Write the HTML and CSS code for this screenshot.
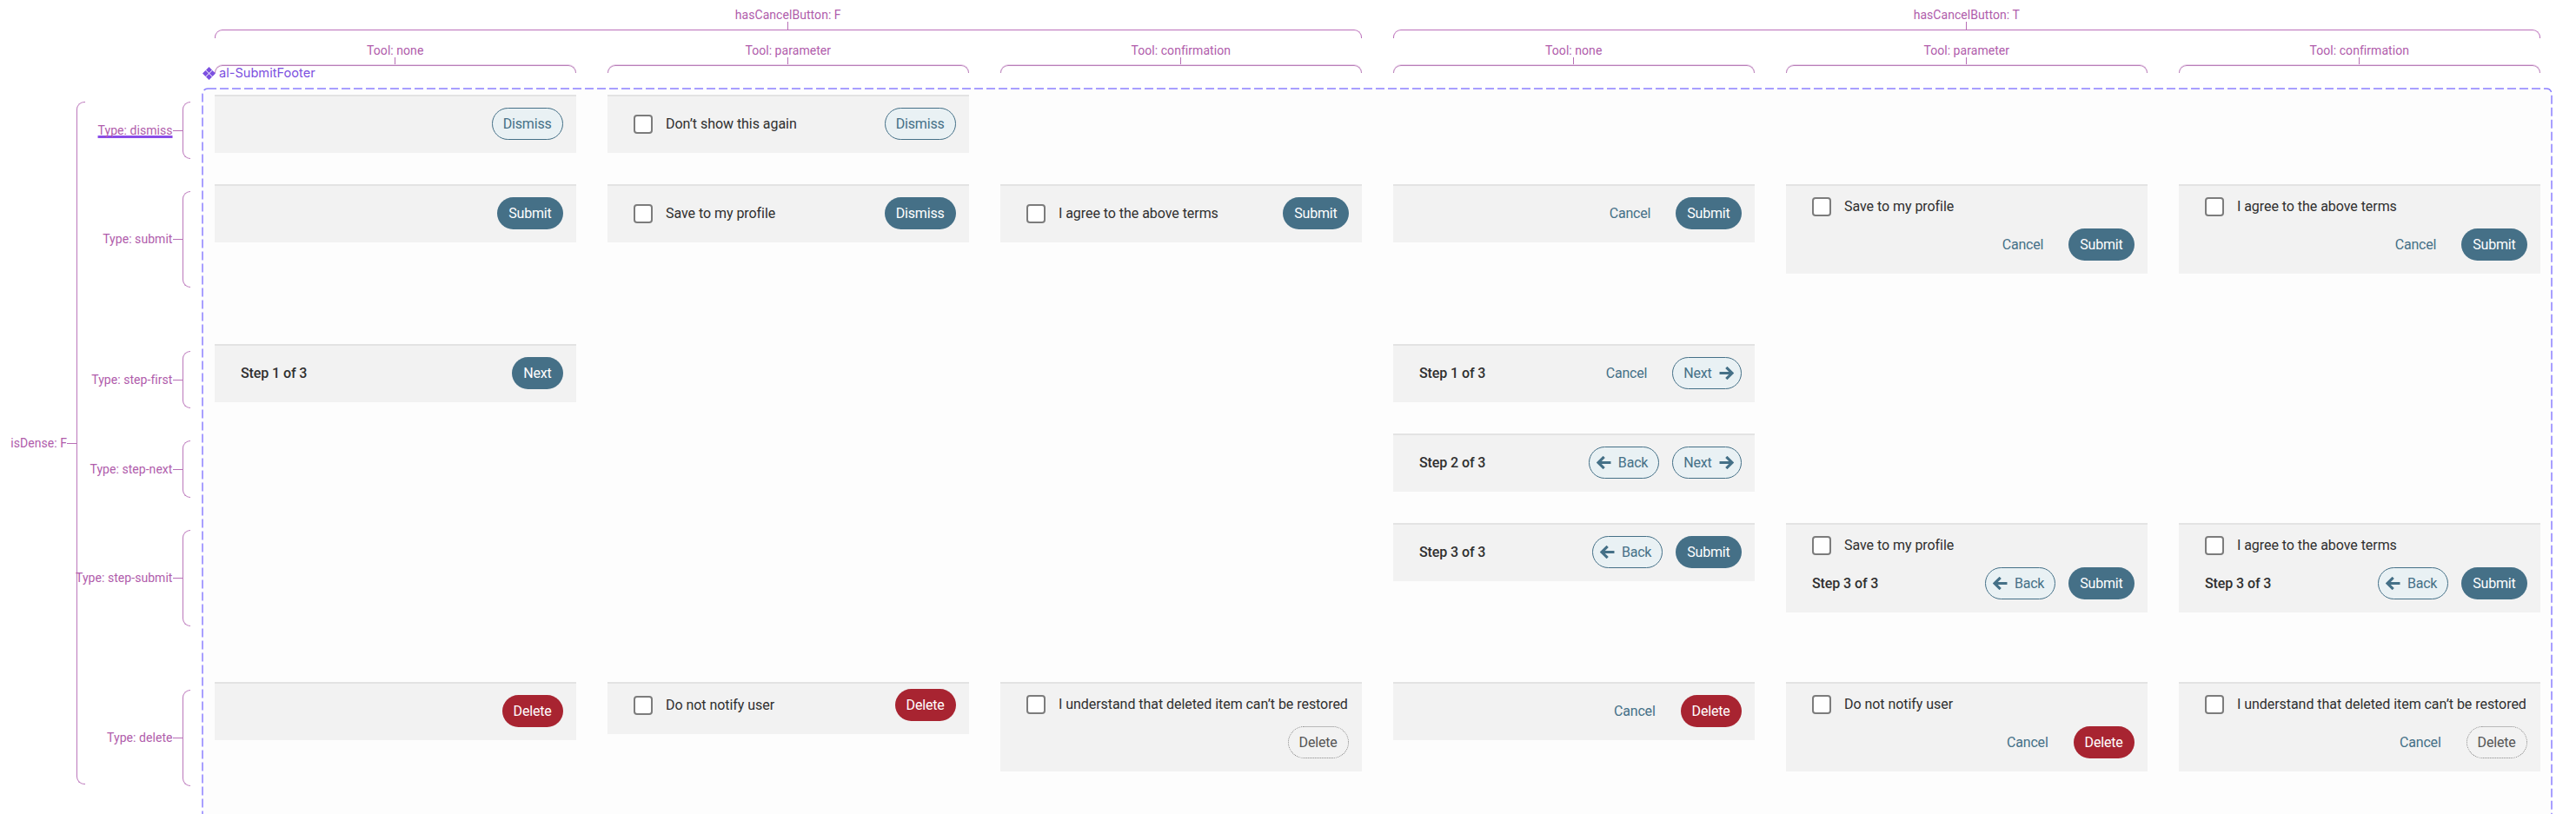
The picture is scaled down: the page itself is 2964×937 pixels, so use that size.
FILE: index.html
```html
<!DOCTYPE html>
<html lang="en">
<head>
<meta charset="utf-8">
<title>al-SubmitFooter</title>
<link rel="stylesheet" href="styles.css">
</head>
<body>
<svg width="0" height="0" class="defs" aria-hidden="true">
  <symbol id="arrow-right" viewBox="0 0 18 16"><path d="M0.500 8H15.500M8.800 1 16 8l-7.200 7" fill="none" stroke="currentColor" stroke-width="3.400"/></symbol>
  <symbol id="arrow-left" viewBox="0 0 18 16"><path d="M17.500 8H2.500M9.200 1 2 8l7.200 7" fill="none" stroke="currentColor" stroke-width="3.400"/></symbol>
</svg>
<main class="board">
  <svg class="frame" viewBox="0 0 2706 900" width="2706" height="900" aria-hidden="true"><rect x="1" y="1" width="2703" height="896" rx="6"/></svg>
  <div class="frame-title">
    <svg width="15" height="15" viewBox="0 0 15 15" aria-hidden="true"><path d="M7.5 0 11 3.5 7.5 7 4 3.5ZM3.500 4 7 7.500 3.500 11 0 7.500ZM11.500 4 15 7.500 11.500 11 8 7.500ZM7.500 8 11 11.500 7.500 15 4 11.500Z"/></svg>
    <span>al-SubmitFooter</span>
  </div>

  <aside class="side">
    <div class="dense">
      <span class="note">isDense: F</span><i class="tick-h"></i><i class="brace brace-dense"></i>
    </div>
    <div class="types">
      <div class="type sm after-sm"><span class="note selected">Type: dismiss</span><i class="tick-h"></i><i class="brace"></i></div>
      <div class="type lg after-lg"><span class="note">Type: submit</span><i class="tick-h"></i><i class="brace"></i></div>
      <div class="type sm after-sm"><span class="note">Type: step-first</span><i class="tick-h"></i><i class="brace"></i></div>
      <div class="type sm after-sm"><span class="note">Type: step-next</span><i class="tick-h"></i><i class="brace"></i></div>
      <div class="type lg after-lg"><span class="note">Type: step-submit</span><i class="tick-h"></i><i class="brace"></i></div>
      <div class="type lg"><span class="note">Type: delete</span><i class="tick-h"></i><i class="brace"></i></div>
    </div>
  </aside>

  <div class="matrix">
    <div class="heads">
      <div class="head group"><span class="note">hasCancelButton: F</span><i class="tick-v"></i><i class="arch"></i></div>
      <div class="head group"><span class="note">hasCancelButton: T</span><i class="tick-v"></i><i class="arch"></i></div>
      <div class="head tool"><span class="note">Tool: none</span><i class="tick-v"></i><i class="arch"></i></div>
      <div class="head tool"><span class="note">Tool: parameter</span><i class="tick-v"></i><i class="arch"></i></div>
      <div class="head tool"><span class="note">Tool: confirmation</span><i class="tick-v"></i><i class="arch"></i></div>
      <div class="head tool"><span class="note">Tool: none</span><i class="tick-v"></i><i class="arch"></i></div>
      <div class="head tool"><span class="note">Tool: parameter</span><i class="tick-v"></i><i class="arch"></i></div>
      <div class="head tool"><span class="note">Tool: confirmation</span><i class="tick-v"></i><i class="arch"></i></div>
    </div>

    <div class="cells">
      <!-- dismiss -->
      <div class="footer r1 c1"><div class="line"><div class="actions"><button class="btn outline">Dismiss</button></div></div></div>
      <div class="footer r1 c2"><div class="line"><label class="check"><i class="box"></i>Don’t show this again</label><div class="actions"><button class="btn outline">Dismiss</button></div></div></div>

      <!-- submit -->
      <div class="footer r2 c1"><div class="line"><div class="actions"><button class="btn primary">Submit</button></div></div></div>
      <div class="footer r2 c2"><div class="line"><label class="check"><i class="box"></i>Save to my profile</label><div class="actions"><button class="btn primary">Dismiss</button></div></div></div>
      <div class="footer r2 c3"><div class="line"><label class="check"><i class="box"></i>I agree to the above terms</label><div class="actions"><button class="btn primary">Submit</button></div></div></div>
      <div class="footer r2 c4"><div class="line"><div class="actions"><button class="btn ghost">Cancel</button><button class="btn primary">Submit</button></div></div></div>
      <div class="footer tall r2 c5"><label class="check"><i class="box"></i>Save to my profile</label><div class="line"><div class="actions"><button class="btn ghost">Cancel</button><button class="btn primary">Submit</button></div></div></div>
      <div class="footer tall r2 c6"><label class="check"><i class="box"></i>I agree to the above terms</label><div class="line"><div class="actions"><button class="btn ghost">Cancel</button><button class="btn primary">Submit</button></div></div></div>

      <!-- step-first -->
      <div class="footer r3 c1"><div class="line"><span class="step">Step 1 of 3</span><div class="actions"><button class="btn primary">Next</button></div></div></div>
      <div class="footer r3 c4"><div class="line"><span class="step">Step 1 of 3</span><div class="actions"><button class="btn ghost">Cancel</button><button class="btn outline icon-right">Next<svg class="arrow"><use href="#arrow-right"/></svg></button></div></div></div>

      <!-- step-next -->
      <div class="footer r4 c4"><div class="line"><span class="step">Step 2 of 3</span><div class="actions"><button class="btn outline icon-left"><svg class="arrow"><use href="#arrow-left"/></svg>Back</button><button class="btn outline icon-right">Next<svg class="arrow"><use href="#arrow-right"/></svg></button></div></div></div>

      <!-- step-submit -->
      <div class="footer r5 c4"><div class="line"><span class="step">Step 3 of 3</span><div class="actions"><button class="btn outline icon-left"><svg class="arrow"><use href="#arrow-left"/></svg>Back</button><button class="btn primary">Submit</button></div></div></div>
      <div class="footer tall r5 c5"><label class="check"><i class="box"></i>Save to my profile</label><div class="line"><span class="step">Step 3 of 3</span><div class="actions"><button class="btn outline icon-left"><svg class="arrow"><use href="#arrow-left"/></svg>Back</button><button class="btn primary">Submit</button></div></div></div>
      <div class="footer tall r5 c6"><label class="check"><i class="box"></i>I agree to the above terms</label><div class="line"><span class="step">Step 3 of 3</span><div class="actions"><button class="btn outline icon-left"><svg class="arrow"><use href="#arrow-left"/></svg>Back</button><button class="btn primary">Submit</button></div></div></div>

      <!-- delete -->
      <div class="footer r6 c1"><div class="line"><div class="actions"><button class="btn danger">Delete</button></div></div></div>
      <div class="footer compact r6 c2"><div class="line"><label class="check"><i class="box"></i>Do not notify user</label><div class="actions"><button class="btn danger">Delete</button></div></div></div>
      <div class="footer tall r6 c3"><label class="check"><i class="box"></i>I understand that deleted item can’t be restored</label><div class="line"><div class="actions"><button class="btn disabled">Delete</button></div></div></div>
      <div class="footer r6 c4"><div class="line"><div class="actions"><button class="btn ghost">Cancel</button><button class="btn danger">Delete</button></div></div></div>
      <div class="footer tall r6 c5"><label class="check"><i class="box"></i>Do not notify user</label><div class="line"><div class="actions"><button class="btn ghost">Cancel</button><button class="btn danger">Delete</button></div></div></div>
      <div class="footer tall r6 c6"><label class="check"><i class="box"></i>I understand that deleted item can’t be restored</label><div class="line"><div class="actions"><button class="btn ghost">Cancel</button><button class="btn disabled">Delete</button></div></div></div>
    </div>
  </div>
</main>
</body>
</html>
```
FILE: styles.css
```css
* { box-sizing: border-box; }
html, body { margin: 0; height: 937px; overflow: hidden; background: #fff; }
body { font-family: Roboto, "Liberation Sans", sans-serif; }
.defs { position: absolute; }

.board { position: relative; display: flex; width: 2964px; height: 937px; overflow: hidden; }

.frame { position: absolute; left: 232px; top: 101px; z-index: 0; }
.frame rect { fill: #fdfdfd; stroke: #8c80ff; stroke-width: 1.5; stroke-dasharray: 10 4; }
.frame-title {
  position: absolute; left: 233px; top: 75px; z-index: 2;
  display: flex; align-items: center; gap: 4px; height: 18px;
  color: #7c50e0; font: 400 14.6px/18px Inter, sans-serif;
}
.frame-title svg { fill: #7c50e0; flex: none; }

/* annotations */
.note { color: #b05cab; font-size: 14px; line-height: 16px; letter-spacing: 0.05px; white-space: nowrap; flex: none; }
.selected { text-decoration: underline 2.5px #8a4de8; text-decoration-skip-ink: none; text-underline-offset: 1px; }
.tick-h { display: block; flex: none; width: 11px; height: 1px; background: #b86fb6; }
.tick-v { display: block; width: 1px; height: 9px; background: #b86fb6; }
.brace {
  display: block; flex: none; width: 9px; align-self: stretch;
  border: 1.5px solid #bb77bb; border-right: 0; border-radius: 9px 0 0 9px;
}
.brace-dense { width: 10px; }

.side { position: relative; z-index: 1; display: flex; flex: none; width: 218.5px; padding-top: 117px; }
.dense { display: flex; flex: none; align-items: center; justify-content: flex-end; width: 98px; height: 786px; }
.types { display: flex; flex-direction: column; flex: none; width: 120.5px; }
.type { display: flex; align-items: center; justify-content: flex-end; }
.type.sm { height: 66px; }
.type.lg { height: 110.5px; }
.after-sm { margin-bottom: 37px; }
.after-lg { margin-bottom: 73.5px; }

.matrix { position: relative; z-index: 1; flex: none; width: 2675.5px; margin-left: 28.5px; padding-top: 9px; }
.heads {
  display: grid; grid-template-columns: repeat(6, 415.5px); column-gap: 36.5px;
  row-gap: 6px; margin-bottom: 25px;
}
.head { display: flex; flex-direction: column; align-items: center; }
.group { grid-column: span 3; }
.arch { display: block; width: 100%; height: 10px; border: 1.5px solid #bb6fba; border-bottom: 0; border-radius: 9px 9px 0 0; }
.tool .arch { height: 9px; box-shadow: 0 -1px 0 #e8cfe8; border-color: #b97fb9; }

/* footers */
.cells {
  display: grid; grid-template-columns: repeat(6, 415.5px); column-gap: 36.5px;
  grid-template-rows: 103px 184px 103px 103px 183px 152px; align-items: start;
}
.r1 { grid-row: 1; } .r2 { grid-row: 2; } .r3 { grid-row: 3; }
.r4 { grid-row: 4; } .r5 { grid-row: 5; } .r6 { grid-row: 6; }
.c1 { grid-column: 1; } .c2 { grid-column: 2; } .c3 { grid-column: 3; }
.c4 { grid-column: 4; } .c5 { grid-column: 5; } .c6 { grid-column: 6; }

.footer {
  display: flex; flex-direction: column; gap: 14px;
  padding: 13px 15px 15px 30px;
  background: #f2f2f2; border-top: 2px solid #e3e3e3;
  color: #2f2f2f; font-size: 16px; line-height: 22px;
}
.footer.compact { padding-top: 6px; }
.line { display: flex; align-items: center; min-height: 37px; }
.actions { display: flex; align-items: center; gap: 15px; margin-left: auto; }
.check { display: flex; align-items: center; gap: 15px; letter-spacing: -0.05px; white-space: nowrap; }
.box { display: block; flex: none; width: 22px; height: 22px; background: #fff; border: 2px solid #7c7c7c; border-radius: 4px; }
.step { font-weight: 500; letter-spacing: -0.1px; white-space: nowrap; }

.btn {
  display: inline-flex; align-items: center; gap: 8px; height: 37px; padding: 0 12px;
  border: 1px solid transparent; border-radius: 18.5px; background: none;
  font: 400 16px/22px Roboto, sans-serif; letter-spacing: -0.2px; white-space: nowrap;
}
.primary { background: #457087; color: #fff; }
.outline { background: #e9f1f4; border-color: #457087; color: #457087; }
.ghost { padding: 0 13px; color: #457087; }
.danger { background: #a82431; color: #fff; }
.disabled { border: 1px dotted #808080; color: #555; }
.icon-right { padding-right: 8px; }
.icon-left { padding-left: 8px; }
.arrow { display: block; flex: none; width: 17px; height: 15px; color: #457087; }
```
